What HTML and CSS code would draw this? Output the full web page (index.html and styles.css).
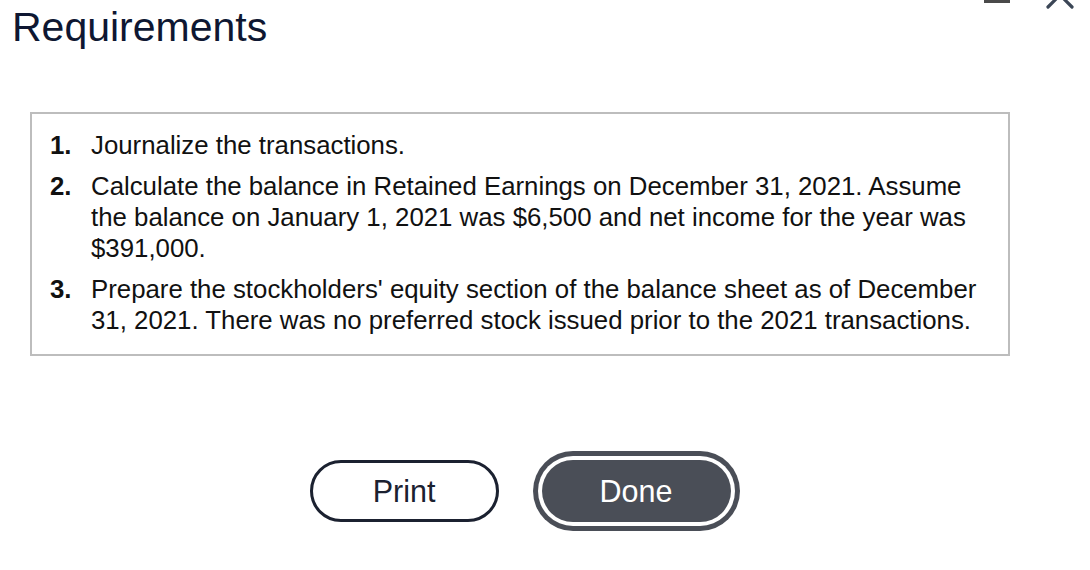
FILE: index.html
```html
<!DOCTYPE html>
<html lang="en">
<head>
<meta charset="utf-8">
<title>Requirements</title>
<link rel="stylesheet" href="styles.css">
</head>
<body>
<div class="window-controls">
  <span class="minimize"></span>
  <svg class="close" width="28" height="28" viewBox="0 0 28 28" aria-hidden="true">
    <path d="M2 2 L26 26 M26 2 L2 26" stroke="#3b4656" stroke-width="3.2" stroke-linecap="round" fill="none"/>
  </svg>
</div>
<h1 class="title">Requirements</h1>
<div class="panel">
  <ol class="req-list">
    <li class="req"><span class="num">1.</span><span class="txt">Journalize the transactions.</span></li>
    <li class="req"><span class="num">2.</span><span class="txt">Calculate the balance in Retained Earnings on December 31, 2021. Assume the balance on January 1, 2021 was $6,500 and net income for the year was $391,000.</span></li>
    <li class="req"><span class="num">3.</span><span class="txt">Prepare the stockholders' equity section of the balance sheet as of December 31, 2021. There was no preferred stock issued prior to the 2021 transactions.</span></li>
  </ol>
</div>
<div class="actions">
  <button class="btn btn-print" type="button">Print</button>
  <button class="btn btn-done" type="button">Done</button>
</div>
</body>
</html>
```

FILE: styles.css
```css
html, body {
  margin: 0;
  padding: 0;
  background: #ffffff;
}
body {
  font-family: "Liberation Sans", Arial, sans-serif;
  width: 1090px;
  height: 570px;
  overflow: hidden;
  position: relative;
}
.window-controls {
  position: absolute;
  top: 0;
  right: 0;
  width: 120px;
  height: 10px;
}
.minimize {
  position: absolute;
  left: 14px;
  top: 0;
  width: 26px;
  height: 3px;
  background: #4a4a4a;
}
.close {
  position: absolute;
  left: 76px;
  top: -19px;
}
.title {
  margin: 0;
  padding: 3px 0 0 12px;
  font-size: 41px;
  line-height: 48px;
  font-weight: 400;
  color: #0e1732;
}
.panel {
  margin: 61px 0 0 30px;
  width: 980px;
  border: 2px solid #bdbdbd;
  padding: 16px 8px 8px 18px;
  box-sizing: border-box;
}
.req-list {
  list-style: none;
  margin: 0;
  padding: 0;
}
.req {
  display: flex;
  font-size: 25.8px;
  line-height: 31px;
  color: #111111;
  margin-bottom: 10px;
}
.num {
  flex: 0 0 41px;
  font-weight: 700;
}
.txt {
  flex: 1;
}
.actions {
  margin: 104px 0 0 30px;
  width: 980px;
  display: flex;
  justify-content: center;
  gap: 43px;
}
.btn {
  width: 189px;
  height: 62px;
  border-radius: 31px;
  font-family: "Liberation Sans", Arial, sans-serif;
  font-size: 30.5px;
  box-sizing: border-box;
  cursor: pointer;
  padding: 0;
}
.btn-print {
  background: #ffffff;
  border: 3px solid #1b2130;
  color: #1b2130;
}
.btn-done {
  background: #4a4e57;
  border: none;
  color: #ffffff;
  box-shadow: 0 0 0 4px #ffffff, 0 0 0 9px #4a4e57;
}
```
